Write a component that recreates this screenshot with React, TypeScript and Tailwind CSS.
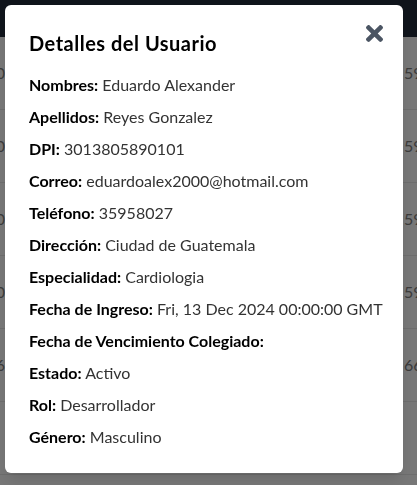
import { useState } from 'react'

const usuario = {
  nombres: 'Eduardo Alexander',
  apellidos: 'Reyes Gonzalez',
  dpi: '3013805890101',
  correo: 'eduardoalex2000@hotmail.com',
  telefono: '35958027',
  direccion: 'Ciudad de Guatemala',
  especialidad: 'Cardiologia',
  fechaIngreso: 'Fri, 13 Dec 2024 00:00:00 GMT',
  fechaVencimiento: '',
  estado: 'Activo',
  rol: 'Desarrollador',
  genero: 'Masculino',
}

const filas = [
  { left: '3013805890100', right: '59581234' },
  { left: '3013805890100', right: '59587788' },
  { left: '3013805890100', right: '59580021' },
  { left: '3013805890100', right: '59589900' },
  { left: '3013805890106', right: '66123456' },
  { left: '', right: '' },
]

export default function App() {
  const [open, setOpen] = useState(true)

  const campos = [
    ['Nombres', usuario.nombres],
    ['Apellidos', usuario.apellidos],
    ['DPI', usuario.dpi],
    ['Correo', usuario.correo],
    ['Teléfono', usuario.telefono],
    ['Dirección', usuario.direccion],
    ['Especialidad', usuario.especialidad],
    ['Fecha de Ingreso', usuario.fechaIngreso],
    ['Fecha de Vencimiento Colegiado', usuario.fechaVencimiento],
    ['Estado', usuario.estado],
    ['Rol', usuario.rol],
    ['Género', usuario.genero],
  ]

  return (
    <div className="min-h-[485px] bg-[#eeeeee] font-['Lato',sans-serif]">
      {/* page behind the modal */}
      <div className="h-[37px] bg-[#1f2937]" />
      <div>
        {filas.map((f, i) => (
          <div key={i} className="flex h-[73px] items-center border-b border-[#dadada] text-[16px] text-[#777777]">
            <div className="flex w-[5px] justify-end overflow-hidden whitespace-nowrap">{f.left}</div>
            <div className="flex-1" />
            <div className="w-[13px] overflow-hidden whitespace-nowrap">{f.right}</div>
          </div>
        ))}
      </div>

      {open && (
        <div className="fixed inset-0 bg-black/50 pt-[5px] pl-[5px]">
          <div className="relative w-[398px] rounded-md bg-white p-6 pr-5 shadow-lg">
            <button
              onClick={() => setOpen(false)}
              className="absolute top-[20px] right-[20px] text-[#4b5563]"
            >
              <svg viewBox="0 80 352 352" className="block h-[17px] w-[17px]" fill="currentColor">
                <path d="M242.72 256l100.07-100.07c12.28-12.28 12.28-32.19 0-44.48l-22.24-22.24c-12.28-12.28-32.19-12.28-44.48 0L176 189.28 75.930 89.21c-12.28-12.28-32.19-12.28-44.48 0L9.21 111.45c-12.28 12.28-12.28 32.19 0 44.48L109.28 256 9.21 356.07c-12.28 12.28-12.28 32.19 0 44.48l22.24 22.24c12.28 12.28 32.2 12.28 44.48 0L176 322.72l100.07 100.07c12.28 12.28 32.2 12.28 44.48 0l22.24-22.24c12.28-12.28 12.28-32.19 0-44.48L242.72 256z" />
              </svg>
            </button>
            <h2 className="mb-4 text-xl font-bold tracking-[0.5px] text-black">Detalles del Usuario</h2>
            <div className="space-y-2">
              {campos.map(([label, value]) => (
                <p key={label} className="whitespace-nowrap text-base leading-6 text-[#333333]">
                  <strong className="text-black">{label}:</strong> {value}
                </p>
              ))}
            </div>
          </div>
        </div>
      )}
    </div>
  )
}
